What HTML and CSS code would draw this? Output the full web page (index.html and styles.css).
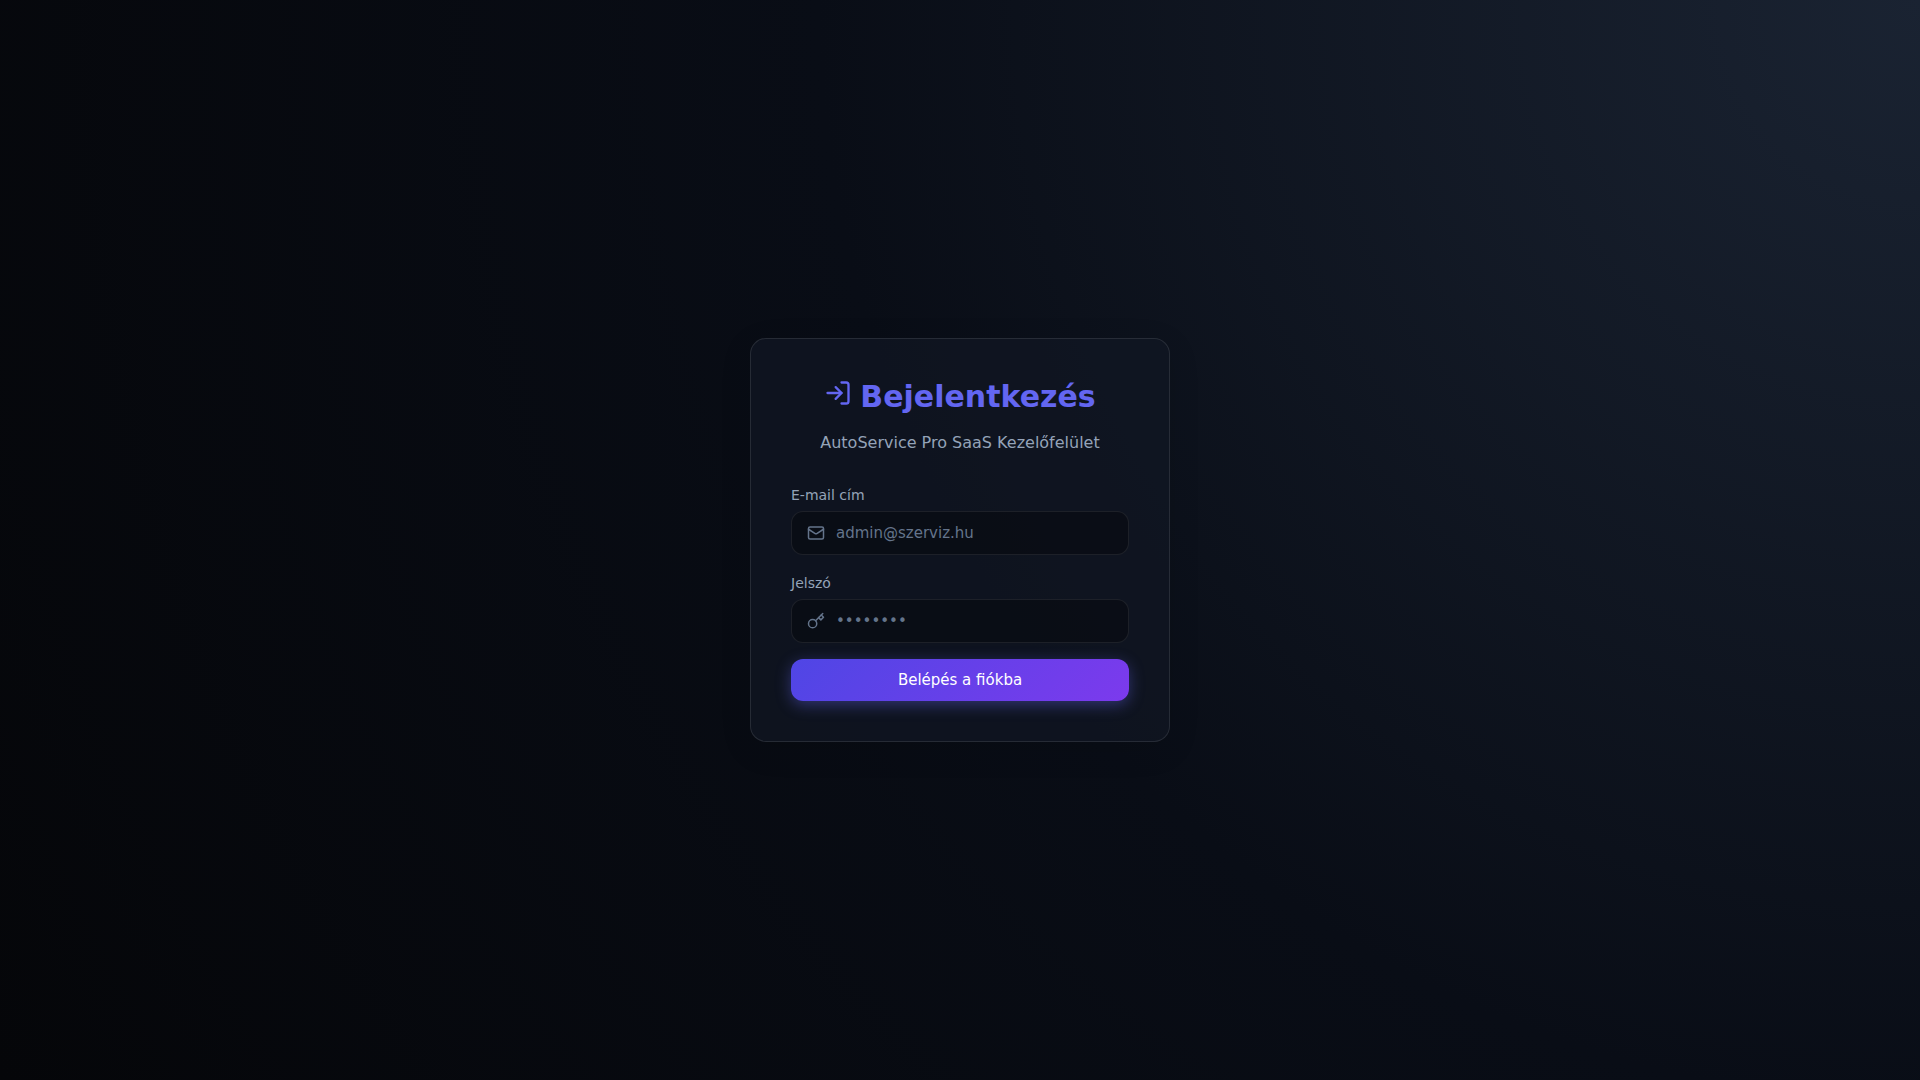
FILE: index.html
```html
<!DOCTYPE html>
<html lang="hu">
<head>
<meta charset="utf-8">
<meta name="viewport" content="width=device-width, initial-scale=1">
<title>Bejelentkezés</title>
<link rel="stylesheet" href="styles.css">
</head>
<body>
<main class="card">
  <header class="card-header">
    <h1 class="title">
      <svg class="title-icon" viewBox="0 0 24 24" aria-hidden="true"><path d="M15 3h4a2 2 0 0 1 2 2v14a2 2 0 0 1-2 2h-4"/><path d="m10 17 5-5-5-5"/><path d="M15 12H3"/></svg>
      <span>Bejelentkezés</span>
    </h1>
    <p class="subtitle">AutoService Pro SaaS Kezelőfelület</p>
  </header>
  <form class="form">
    <div class="field">
      <label class="label" for="email">E-mail cím</label>
      <div class="control">
        <svg class="control-icon" viewBox="0 0 24 24" aria-hidden="true"><rect x="2" y="4" width="20" height="16" rx="2"/><path d="m22 7-8.970 5.700a1.940 1.940 0 0 1-2.060 0L2 7"/></svg>
        <input class="input" id="email" type="email" placeholder="admin@szerviz.hu">
      </div>
    </div>
    <div class="field">
      <label class="label" for="password">Jelszó</label>
      <div class="control">
        <svg class="control-icon" viewBox="0 0 24 24" aria-hidden="true"><circle cx="7.5" cy="15.5" r="5.5"/><path d="m21 2-9.600 9.600"/><path d="m15.500 7.500 3 3L22 7l-3-3"/></svg>
        <input class="input" id="password" type="password" placeholder="••••••••">
      </div>
    </div>
    <button class="submit" type="submit">Belépés a fiókba</button>
  </form>
</main>
</body>
</html>
```
FILE: styles.css
```css
* {
  box-sizing: border-box;
  margin: 0;
}

body {
  min-height: 100vh;
  display: flex;
  align-items: center;
  justify-content: center;
  padding: 16px;
  background: radial-gradient(circle at top right, #1a2332, #090d16 50%, #050609);
  color: #94a3b8;
  font-family: "DejaVu Sans", sans-serif;
  font-size: 16px;
}

.card {
  width: 100%;
  max-width: 420px;
  padding: 40px;
  border: 1px solid rgba(255, 255, 255, 0.1);
  border-radius: 16px;
  background: rgba(17, 23, 35, 0.7);
  box-shadow: 0 8px 32px rgba(0, 0, 0, 0.1);
}

.card-header {
  margin-bottom: 32px;
  text-align: center;
}

.title {
  display: flex;
  justify-content: center;
  gap: 8px;
  margin-bottom: 16px;
  color: #6366f1;
  font-size: 30px;
  line-height: 36px;
}

.title-icon {
  width: 28px;
  height: 28px;
}

.title-icon,
.control-icon {
  fill: none;
  stroke: currentColor;
  stroke-width: 2;
  stroke-linecap: round;
  stroke-linejoin: round;
}

.subtitle {
  line-height: 24px;
}

.form,
.field {
  display: flex;
  flex-direction: column;
}

.form {
  gap: 16px;
}

.field {
  gap: 8px;
}

.field + .field {
  margin-top: 4px;
}

.label {
  font-size: 14px;
  line-height: 16px;
}

.control {
  display: flex;
  align-items: center;
  gap: 11px;
  height: 44px;
  padding: 0 15px;
  border: 1px solid rgba(255, 255, 255, 0.08);
  border-radius: 12px;
  background: rgba(0, 0, 0, 0.3);
}

.control:focus-within {
  border-color: #6366f1;
}

.control-icon {
  flex: none;
  width: 18px;
  height: 18px;
  color: #64748b;
}

.input {
  flex: 1;
  min-width: 0;
  padding: 0;
  border: 0;
  outline: 0;
  background: none;
  color: #f8fafc;
  font: 15px "DejaVu Sans", sans-serif;
}

.input::placeholder {
  color: #64748b;
}

.submit {
  height: 42px;
  border: 0;
  border-radius: 12px;
  background: linear-gradient(135deg, #4f46e5, #7c3aed);
  box-shadow: 0 4px 15px rgba(99, 102, 241, 0.4);
  color: #fff;
  font: 15px "DejaVu Sans", sans-serif;
  cursor: pointer;
}
```
